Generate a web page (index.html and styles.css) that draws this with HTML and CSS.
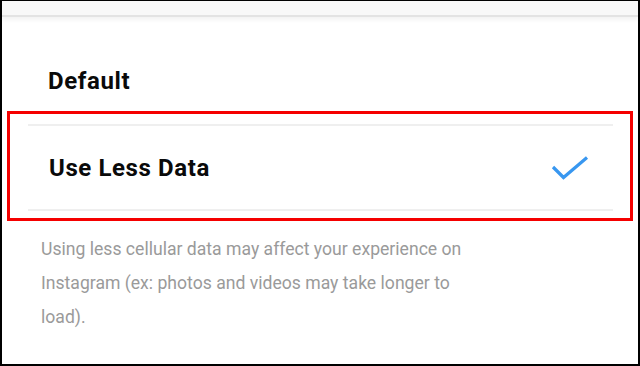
FILE: index.html
```html
<!DOCTYPE html>
<html>
<head>
<meta charset="utf-8">
<link rel="stylesheet" href="styles.css">
</head>
<body>
<div class="page">
  <div class="topbar"></div>
  <div class="option default">Default</div>
  <div class="selected">
    <div class="sep"></div>
    <div class="row">
      <span class="option">Use Less Data</span>
      <svg class="check" width="38" height="26" viewBox="0 0 38 26"><polyline points="2,12 12.5,22.5 36,2.5" fill="none" stroke="#3897f0" stroke-width="3.2"/></svg>
    </div>
    <div class="sep"></div>
  </div>
  <p class="desc">Using less cellular data may affect your experience on Instagram (ex: photos and videos may take longer to load).</p>
</div>
</body>
</html>
```
FILE: styles.css
```css
* { box-sizing: border-box; }
html, body { margin: 0; padding: 0; background: #fff; }
.page {
  width: 640px;
  height: 366px;
  border-style: solid;
  border-color: #000;
  border-width: 1px 2px 2px 2px;
  background: #fff;
  display: flex;
  flex-direction: column;
  font-family: Roboto, "Liberation Sans", sans-serif;
  overflow: hidden;
}
.topbar {
  height: 16px;
  flex: none;
  background: #f8f8f8;
  border-bottom: 2px solid #e3e3e3;
  box-shadow: 0 3px 4px rgba(0,0,0,0.05);
}
.option {
  font-size: 24px;
  font-weight: 700;
  line-height: 28px;
  letter-spacing: 0.6px;
  color: #0a0a0a;
}
.default {
  margin-top: 50px;
  padding-left: 46px;
}
.selected {
  margin: 16px 5px 0 5px;
  border: 3px solid #f50000;
  padding: 10px 17px 7px 18px;
}
.sep {
  height: 2px;
  background: #efefef;
}
.row {
  height: 83px;
  display: flex;
  align-items: center;
  justify-content: space-between;
  padding: 0 24px 0 21px;
}
.check { display: block; }
.desc {
  margin: 11px 0 0 0;
  padding-left: 39px;
  width: 480px;
  font-size: 17.6px;
  line-height: 34px;
  color: #9a9a9a;
}
```
